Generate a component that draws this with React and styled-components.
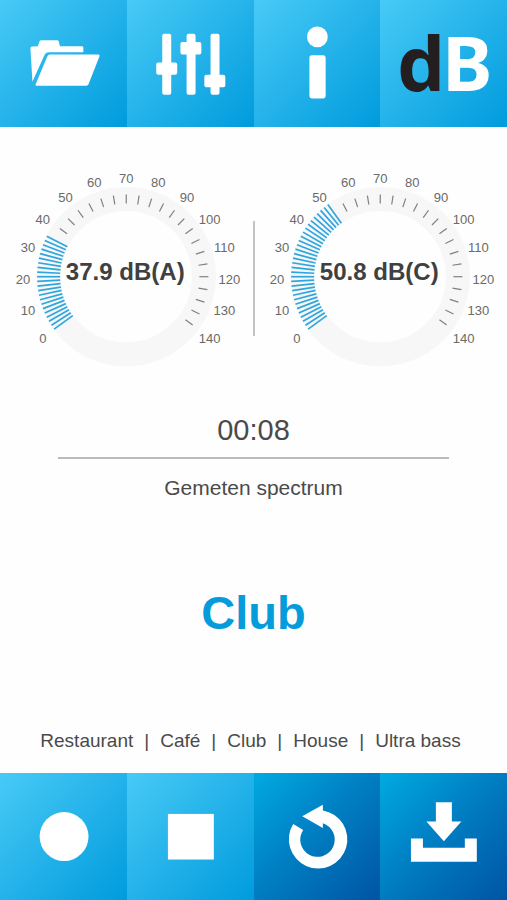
import { useState } from "react";
import styled, { createGlobalStyle } from "styled-components";

const spectra = ["Restaurant", "Café", "Club", "House", "Ultra bass"];

// 0 dB sits 36 degrees below the horizontal, every dB is 1.8 degrees
const toPoint = (db, rx, ry = rx) => {
  const angle = ((216 - db * 1.8) * Math.PI) / 180;
  return { x: Math.cos(angle) * rx, y: -Math.sin(angle) * ry };
};

function Tick({ db, from, to, active }) {
  const a = toPoint(db, from);
  const b = toPoint(db, to);
  return <TickLine x1={a.x} y1={a.y} x2={b.x} y2={b.y} $active={active} />;
}

function Gauge({ value, unit }) {
  const reached = Math.floor(value / 5) * 5;
  const activeTicks = Array.from({ length: (reached / 5) * 3 + 1 }, (_, i) => (i * 5) / 3);
  const restTicks = Array.from({ length: 29 }, (_, i) => i * 5).filter((db) => db > reached);
  const labels = Array.from({ length: 15 }, (_, i) => i * 10);

  return (
    <GaugeSvg viewBox="0 0 253 213" role="img" aria-label={`${value} ${unit}`}>
      <g transform="translate(126 109.500)">
        <Ring r="77.5" />
        {activeTicks.map((db) => (
          <Tick key={db} db={db} from={66} to={89} active />
        ))}
        {restTicks.map((db) => (
          <Tick key={db} db={db} from={73} to={82} />
        ))}
        {labels.map((db) => {
          const p = toPoint(db, 103, 101);
          return (
            <ScaleLabel key={db} x={p.x} y={p.y + 7}>
              {db}
            </ScaleLabel>
          );
        })}
        <ValueLabel x="-1" y="3">
          {value} {unit}
        </ValueLabel>
      </g>
    </GaugeSvg>
  );
}

export default function App() {
  const [spectrum, setSpectrum] = useState("Club");

  return (
    <>
      <GlobalStyle />
      <Page>
        <TileBar>
          <Tile aria-label="Open">
            <Icon viewBox="0 0 127 127">
              <path d="M32.500 82 L30.500 48.500 Q30.500 47 32 46.700 L38 46.300 L39.500 41.700 Q40 40.300 41.500 40.300 L57 40.300 Q58.500 40.300 58.900 41.700 L60 46.300 L82 46.300 Q83.500 46.300 83.500 47.800 L83.500 52.300 L49 52.300 Q46 52.300 44.700 54.800 Z" />
              <path d="M50 54.700 L98.500 54.700 Q100.300 54.700 99.700 56.300 L88.700 84.500 Q88.100 86 86.500 86 L36.500 86 Q35 86 35.700 84.500 L47.500 56.300 Q48.200 54.700 50 54.700 Z" />
            </Icon>
          </Tile>
          <Tile aria-label="Settings">
            <Icon viewBox="0 0 127 127">
              <rect x="35.300" y="33.700" width="9" height="61.300" rx="2" />
              <rect x="29.300" y="62.500" width="21" height="12.500" rx="2" />
              <rect x="59.700" y="33.700" width="9" height="61.300" rx="2" />
              <rect x="53.500" y="42" width="21" height="12.500" rx="2" />
              <rect x="83.700" y="33.700" width="9" height="61.300" rx="2" />
              <rect x="77.500" y="75" width="21" height="12.500" rx="2" />
            </Icon>
          </Tile>
          <Tile aria-label="Info">
            <Icon viewBox="0 0 127 127">
              <circle cx="63.500" cy="37" r="10.400" />
              <rect x="55.500" y="55.300" width="16.300" height="43.500" rx="2.500" />
            </Icon>
          </Tile>
          <Tile aria-label="dB">
            <Icon viewBox="0 0 127 127">
              <LogoText y="91">
                <tspan x="17" fill="#231f20">d</tspan>
                <tspan x="62">B</tspan>
              </LogoText>
            </Icon>
          </Tile>
        </TileBar>

        <Main>
          <Gauges>
            <Gauge value={37.9} unit="dB(A)" />
            <Gauge value={50.8} unit="dB(C)" />
            <Divider />
          </Gauges>
          <Timer>00:08</Timer>
          <Rule />
          <Subtitle>Gemeten spectrum</Subtitle>
          <Result>{spectrum}</Result>
          <SpectrumNav>
            {spectra.map((name, index) => (
              <SpectrumItem key={name}>
                {index > 0 && <span>|</span>}
                <SpectrumButton onClick={() => setSpectrum(name)}>{name}</SpectrumButton>
              </SpectrumItem>
            ))}
          </SpectrumNav>
        </Main>

        <TileBar>
          <Tile aria-label="Record">
            <Icon viewBox="0 0 127 127">
              <circle cx="64.200" cy="63.700" r="24.500" />
            </Icon>
          </Tile>
          <Tile aria-label="Stop">
            <Icon viewBox="0 0 127 127">
              <rect x="41" y="41" width="46" height="45.700" />
            </Icon>
          </Tile>
          <Tile $dark aria-label="Reset">
            <Icon viewBox="0 0 127 127">
              <path d="M39.300 51 L49.300 57 A17.300 17.300 0 1 0 69 50.300 L69 55 L48.300 43.300 L69 31.700 L69 37.500 A29.300 29.300 0 1 1 39.300 51 Z" />
            </Icon>
          </Tile>
          <Tile $dark aria-label="Save">
            <Icon viewBox="0 0 127 127">
              <path d="M56 29.300 H72 V48.700 H81.500 L64 68.300 L46.500 48.700 H56 Z" />
              <path d="M31 65.700 H43 V75 H85 V65.700 H97 V89 H31 Z" />
            </Icon>
          </Tile>
        </TileBar>
      </Page>
    </>
  );
}

const GlobalStyle = createGlobalStyle`
  body {
    margin: 0;
    background: #fefefe;
    color: #4a4a4a;
    font-family: "Liberation Sans", Arial, sans-serif;
  }
`;

const Page = styled.div`
  display: flex;
  flex-direction: column;
  min-height: 100vh;
`;

const TileBar = styled.div`
  display: grid;
  grid-template-columns: repeat(4, 1fr);
`;

const Tile = styled.button`
  aspect-ratio: 1;
  padding: 0;
  border: none;
  cursor: pointer;
  background: ${(props) =>
    props.$dark
      ? "linear-gradient(135deg, #00aae2, #0080c4 45%, #0054a4)"
      : "linear-gradient(135deg, #48caf6, #009bdd)"};
`;

const Icon = styled.svg`
  display: block;
  width: 100%;
  fill: #fff;
`;

const LogoText = styled.text`
  font-family: "Noto Sans", "Open Sans", sans-serif;
  font-size: 76px;
  font-weight: 700;
`;

const Main = styled.main`
  flex: 1;
  display: flex;
  flex-direction: column;
  padding: 40px 0 20px;
  text-align: center;
`;

const Gauges = styled.section`
  display: grid;
  grid-template-columns: 1fr 1fr;
`;

const Divider = styled.div`
  grid-area: 1 / 1 / 2 / 3;
  justify-self: center;
  width: 2px;
  margin: 54px 0 44px;
  background: #c4c4c4;
`;

const GaugeSvg = styled.svg`
  grid-row: 1;
  grid-column: 1;
  display: block;
  width: 100%;

  & + & {
    grid-column: 2;
  }
`;

const Ring = styled.circle`
  fill: none;
  stroke: #f7f7f7;
  stroke-width: 24;
`;

const TickLine = styled.line`
  stroke: ${(props) => (props.$active ? "#2fa6dd" : "#808080")};
  stroke-width: ${(props) => (props.$active ? 1.7 : 1.2)};
`;

const ScaleLabel = styled.text`
  fill: #6a6a6a;
  font-size: 13px;
  text-anchor: middle;
`;

const ValueLabel = styled.text`
  fill: #404040;
  font-size: 24px;
  font-weight: bold;
  text-anchor: middle;
`;

const Timer = styled.div`
  margin-top: 32px;
  font-size: 29px;
  line-height: 36px;
`;

const Rule = styled.hr`
  width: auto;
  height: 2px;
  margin: 9px 58px 17px;
  border: none;
  background: #b9bcba;
`;

const Subtitle = styled.div`
  font-size: 21px;
  line-height: 24px;
`;

const Result = styled.h1`
  flex: 1;
  display: flex;
  align-items: center;
  justify-content: center;
  margin: 0 0 4px;
  color: #069bdb;
  font-size: 47px;
  line-height: 56px;
`;

const SpectrumNav = styled.nav`
  display: flex;
  justify-content: center;
  gap: 11px;
  padding-right: 6px;
  font-size: 19px;
  line-height: 24px;
`;

const SpectrumItem = styled.div`
  display: flex;
  gap: 11px;
`;

const SpectrumButton = styled.button`
  padding: 0;
  border: none;
  background: none;
  color: inherit;
  font: inherit;
  cursor: pointer;
`;
